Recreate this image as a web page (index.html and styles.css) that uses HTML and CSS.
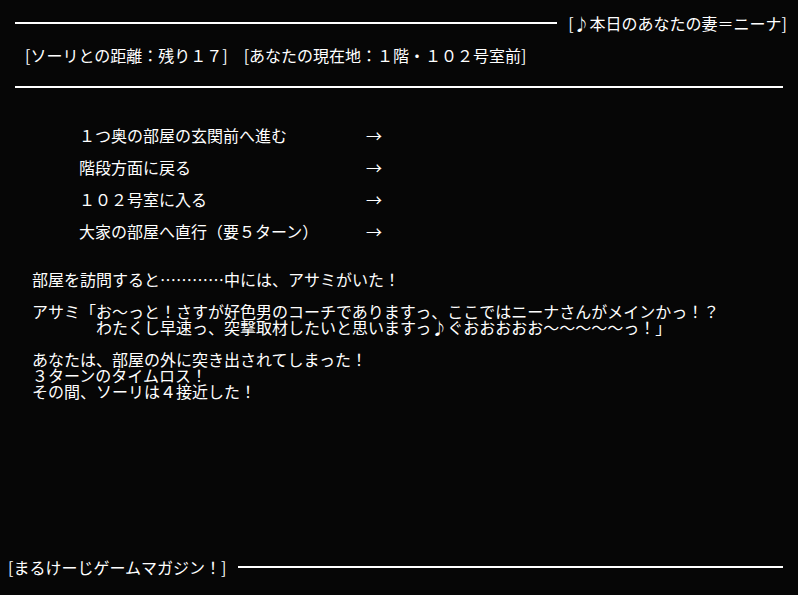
FILE: index.html
```html
<!DOCTYPE html>
<html lang="ja">
<head>
  <meta charset="UTF-8" />
  <meta name="viewport" content="width=device-width, initial-scale=1" />
  <title>まるけーじゲームマガジン！</title>
  <link rel="stylesheet" href="styles.css">
</head>
<body>
  <header class="top">
    <div class="rule"></div>
    <h1 class="wife">[♪本日のあなたの妻＝ニーナ]</h1>
  </header>

  <p class="status">[ソーリとの距離：残り１７]　[あなたの現在地：１階・１０２号室前]</p>
  <div class="rule wide"></div>

  <main>
    <ul class="menu">
      <li><a href="#">１つ奥の部屋の玄関前へ進む</a><span class="arrow">→</span></li>
      <li><a href="#">階段方面に戻る</a><span class="arrow">→</span></li>
      <li><a href="#">１０２号室に入る</a><span class="arrow">→</span></li>
      <li><a href="#">大家の部屋へ直行（要５ターン）</a><span class="arrow">→</span></li>
    </ul>

    <div class="message">
      <p>部屋を訪問すると…………中には、アサミがいた！</p>
      <p>アサミ「お～っと！さすが好色男のコーチでありますっ、ここではニーナさんがメインかっ！？<br>　　　　わたくし早速っ、突撃取材したいと思いますっ♪ぐおおおおお～～～～～っ！」</p>
      <p>あなたは、部屋の外に突き出されてしまった！<br>３ターンのタイムロス！<br>その間、ソーリは４接近した！</p>
    </div>
  </main>

  <footer class="bottom">
    <p class="magazine">[まるけーじゲームマガジン！]</p>
    <div class="rule"></div>
  </footer>
</body>
</html>
```

FILE: styles.css
```css
body {
  margin: 0;
  background: #060606;
  color: #fff;
  font-family: "Noto Sans CJK JP", sans-serif;
  font-size: 16px;
  line-height: 16px;
  display: flex;
  flex-direction: column;
  min-height: 100vh;
}
p, h1, ul {
  margin: 0;
  padding: 0;
}
.rule {
  height: 2px;
  background: #fff;
}
.top {
  display: flex;
  align-items: center;
  padding: 15px 11px 0 15px;
}
.top .rule {
  flex: 1;
}
.wife {
  font-size: 16px;
  font-weight: 400;
  margin-left: 11px;
}
.status {
  margin: 16px 0 0 25px;
}
.rule.wide {
  margin: 23px 15px 0;
}
.menu {
  list-style: none;
  margin: 39px 0 0 79px;
  display: flex;
  flex-direction: column;
  gap: 16px;
}
.menu li {
  display: grid;
  grid-template-columns: 287px 16px;
}
.menu a {
  color: #fff;
  text-decoration: none;
}
.message {
  margin: 32px 0 0 32px;
}
.message p + p {
  margin-top: 16px;
}
.bottom {
  margin-top: auto;
  display: flex;
  align-items: center;
  padding: 0 15px 20px 8px;
}
.bottom .rule {
  flex: 1;
  margin-left: 12px;
}
```
